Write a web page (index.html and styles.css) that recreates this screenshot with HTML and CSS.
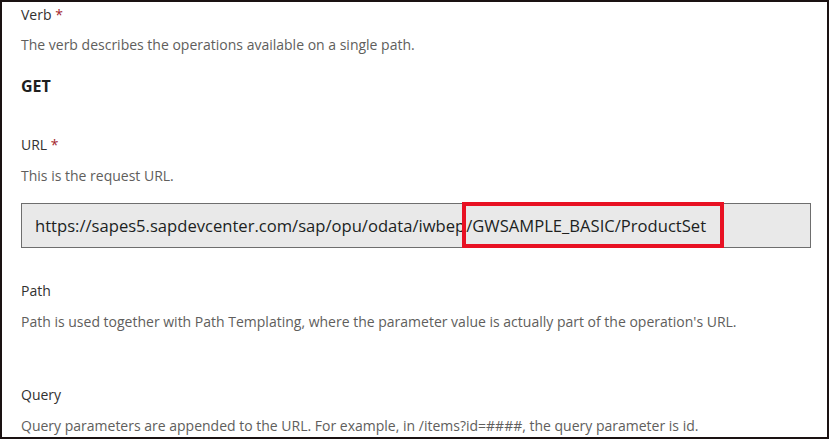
FILE: index.html
```html
<!DOCTYPE html>
<html>
<head>
<meta charset="utf-8">
<link rel="stylesheet" href="styles.css">
</head>
<body>
<div class="frame">
  <div class="field field-verb">
    <div class="label">Verb <span class="req">*</span></div>
    <div class="desc">The verb describes the operations available on a single path.</div>
    <div class="value">GET</div>
  </div>
  <div class="field field-url">
    <div class="label">URL <span class="req">*</span></div>
    <div class="desc">This is the request URL.</div>
    <div class="input">
      <span class="input-text">https://sapes5.sapdevcenter.com/sap/opu/odata/iwbep</span><span class="highlight">/GWSAMPLE_BASIC/ProductSet</span>
    </div>
  </div>
  <div class="field field-path">
    <div class="label">Path</div>
    <div class="desc">Path is used together with Path Templating, where the parameter value is actually part of the operation's URL.</div>
  </div>
  <div class="field field-query">
    <div class="label">Query</div>
    <div class="desc">Query parameters are appended to the URL. For example, in /items?id=####, the query parameter is id.</div>
  </div>
</div>
</body>
</html>
```
FILE: styles.css
```css
* { box-sizing: border-box; }
html, body { margin: 0; padding: 0; background: #ffffff; }
body { font-family: "Open Sans", "Noto Sans", sans-serif; }
.frame {
  width: 829px;
  height: 439px;
  border: 2px solid #1a1212;
  padding: 3px 16px 0 19px;
  overflow: hidden;
  background: #ffffff;
}
.label {
  font-size: 14px;
  line-height: 20px;
  color: #323130;
}
.req { color: #a4262c; }
.desc {
  font-size: 14px;
  line-height: 20px;
  color: #605e5c;
  margin-top: 10px;
  white-space: nowrap;
}
.value {
  margin-top: 21px;
  font-size: 16px;
  line-height: 20px;
  font-weight: 700;
  color: #201f1e;
}
.field-url { margin-top: 39px; }
.field-url .desc { margin-top: 11px; }
.input {
  margin-top: 17px;
  width: 790px;
  height: 45px;
  border: 1px solid #6e6e6e;
  background: #e9e9e9;
  display: flex;
  align-items: stretch;
  font-size: 16.6px;
  color: #201f1e;
}
.input-text {
  padding-left: 13px;
  align-self: center;
}
.highlight {
  display: flex;
  align-items: center;
  margin: -2px 0 -1px -3px;
  padding: 0 14px 0 0;
  border: 4px solid #e81123;
}
.field-path { margin-top: 33px; }
.field-path .desc { margin-top: 11px; }
.field-query { margin-top: 53px; }
.field-query .desc { margin-top: 11px; }
```
